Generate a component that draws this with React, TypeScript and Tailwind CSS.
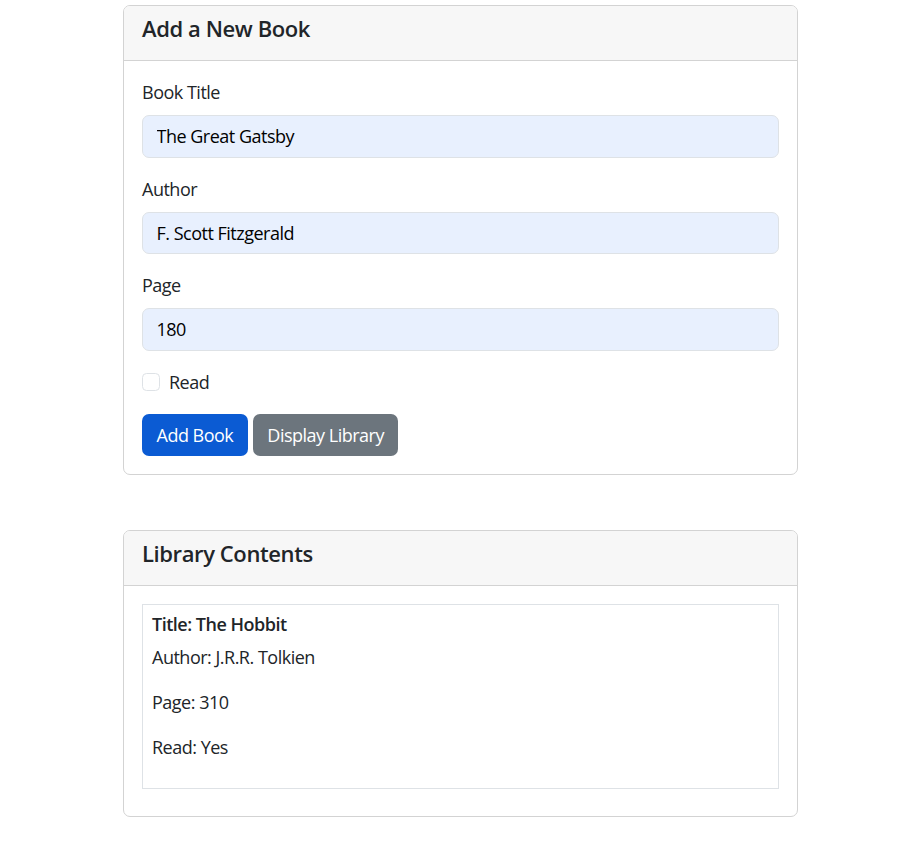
import { useState } from "react";

type Book = { title: string; author: string; pages: number; read: boolean };

const font = { fontFamily: '"Open Sans", "Noto Sans", sans-serif' };

function Card({ title, children }: { title: string; children: React.ReactNode }) {
  return (
    <div className="rounded-[7px] border border-[#d3d3d3] bg-white">
      {/* Header */}
      <div className="rounded-t-[6px] border-b border-[#d3d3d3] bg-[#f7f7f7] px-[18px] pt-[9px] pb-[9px]">
        <h5 className="mb-[9px] text-[22px] font-semibold leading-[27px] tracking-[-0.4px] text-[#212529]">{title}</h5>
      </div>
      <div className="p-[18px]">{children}</div>
    </div>
  );
}

function Field({ label, value }: { label: string; value: string }) {
  return (
    <div className="mb-[18px]">
      <label className="mb-[9px] block leading-[27px]">{label}</label>
      <input
        readOnly
        value={value}
        className="block h-[42.5px] w-full rounded-[7px] border border-[#dee2e6] bg-[#e8f0fe] px-[13.5px] text-[18px] tracking-[-0.5px] text-black outline-none"
      />
    </div>
  );
}

export default function App() {
  const [books] = useState<Book[]>([
    { title: "The Hobbit", author: "J.R.R. Tolkien", pages: 310, read: true },
  ]);

  return (
    <div className="min-h-[844px] bg-white pt-[5px] text-[18px] tracking-[-0.5px] text-[#212529]" style={font}>
      <div className="ml-[123px] w-[675px]">
        <Card title="Add a New Book">
          <Field label="Book Title" value="The Great Gatsby" />
          <Field label="Author" value="F. Scott Fitzgerald" />
          <Field label="Page" value="180" />

          {/* Read checkbox */}
          <div className="mb-[18.5px] flex h-[27px] items-center gap-[9px]">
            <span className="block h-[18px] w-[18px] rounded-[4.5px] border border-[#dee2e6] bg-white" />
            <span className="leading-[27px]">Read</span>
          </div>

          <div className="flex gap-[5px]">
            <button className="h-[42px] rounded-[7px] bg-[#0b5bd3] px-[14.5px] text-[18px] tracking-[-0.5px] text-white">Add Book</button>
            <button className="h-[42px] rounded-[7px] bg-[#6c757d] px-[14.5px] text-[18px] tracking-[-0.5px] text-white">Display Library</button>
          </div>
        </Card>

        <div className="mt-[54.5px]">
          <Card title="Library Contents">
            {books.map((b) => (
              <div key={b.title} className="mb-[9px] border border-[#dee2e6] p-[9px]">
                <h6 className="mb-[9px] text-[18px] font-semibold leading-[21.6px]">Title: {b.title}</h6>
                <p className="mb-[18px] leading-[27px]">Author: {b.author}</p>
                <p className="mb-[18px] leading-[27px]">Page: {b.pages}</p>
                <p className="mb-[18px] leading-[27px]">Read: {b.read ? "Yes" : "No"}</p>
              </div>
            ))}
          </Card>
        </div>
      </div>
    </div>
  );
}
